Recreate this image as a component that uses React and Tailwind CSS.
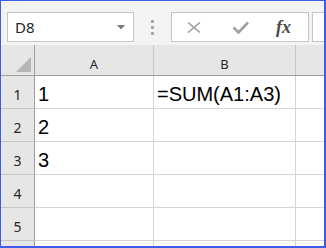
export default function App() {
  const rows = [
    { n: "1", a: "1", b: "=SUM(A1:A3)" },
    { n: "2", a: "2", b: "" },
    { n: "3", a: "3", b: "" },
    { n: "4", a: "", b: "" },
    { n: "5", a: "", b: "" },
    { n: "", a: "", b: "" },
  ];
  return (
    <div className="w-[326px] h-[248px] border-l border-t border-r-2 border-b-2 border-[#3c5de6] overflow-hidden flex flex-col bg-white">
      <div className="h-[44px] shrink-0 bg-[#f3f3f3] flex items-start pt-[11px] pl-[6px]">
        <div className="w-[127px] h-[30px] bg-white border border-[#c6c6c6] flex items-center justify-between pl-[7px] pr-[8px]">
          <span className="text-[15px] text-[#262626] leading-none" style={{ fontFamily: '"Noto Sans", sans-serif' }}>D8</span>
          <svg width="8" height="5" viewBox="0 0 8 5"><path d="M0 0 L8 0 L4 4.5 Z" fill="#7a7a7a" /></svg>
        </div>
        <div className="w-[37px] h-[30px] flex flex-col items-center justify-center gap-[3px]">
          <div className="w-[3px] h-[3px] bg-[#a8a8a8]" />
          <div className="w-[3px] h-[3px] bg-[#a8a8a8]" />
          <div className="w-[3px] h-[3px] bg-[#a8a8a8]" />
        </div>
        <div className="w-[138px] h-[30px] bg-white border border-[#c6c6c6] flex items-center">
          <div className="w-[15px]" />
          <svg width="14" height="11" viewBox="0 0 14 11">
            <path d="M1 0.5 L13 10.5 M13 0.5 L1 10.5" stroke="#a0a0a0" strokeWidth="1.6" />
          </svg>
          <div className="w-[31px]" />
          <svg width="17" height="13" viewBox="0 0 17 13">
            <path d="M1.5 6.5 L6.5 11.5 L16 1.5" stroke="#a0a0a0" strokeWidth="2.6" fill="none" />
          </svg>
          <div className="w-[27px]" />
          <span className="italic text-[18px] text-[#4a4a4a] leading-none font-bold" style={{ fontFamily: '"Liberation Serif", serif' }}>fx</span>
        </div>
        <div className="ml-[3px] flex-1 h-[30px] bg-white border border-r-0 border-[#c6c6c6]" />
      </div>
      <div className="h-[31px] shrink-0 flex border-b border-[#9e9e9e] bg-[#e6e6e6]">
        <div className="w-[34px] shrink-0 border-r border-[#9e9e9e] flex items-end justify-end pr-[3px] pb-[3px]">
          <svg width="15" height="15" viewBox="0 0 15 15"><path d="M15 0 L15 15 L0 15 Z" fill="#b5b5b5" /></svg>
        </div>
        <div className="w-[119px] shrink-0 border-r border-[#c6c6c6] flex items-end justify-center pb-[1px] text-[13px] text-[#262626]" style={{ fontFamily: '"Noto Sans", sans-serif' }}>A</div>
        <div className="w-[142px] shrink-0 border-r border-[#c6c6c6] flex items-end justify-center pb-[1px] text-[13px] text-[#262626]" style={{ fontFamily: '"Noto Sans", sans-serif' }}>B</div>
        <div className="flex-1" />
      </div>
      {rows.map((r, i) => (
        <div key={i} className="h-[33px] shrink-0 flex">
          <div className="w-[34px] shrink-0 bg-[#e6e6e6] border-r border-b border-r-[#9e9e9e] border-b-[#c6c6c6] flex items-end justify-center pb-[3px] text-[14px] text-[#262626]" style={{ fontFamily: '"Noto Sans", sans-serif' }}>{r.n}</div>
          <div className="w-[119px] shrink-0 border-r border-b border-[#d4d4d4] flex items-end pl-[3px] pb-[1px] text-[20px] text-black leading-[26px]" style={{ fontFamily: '"Liberation Sans", Arial, sans-serif' }}>{r.a}</div>
          <div className="w-[142px] shrink-0 border-r border-b border-[#d4d4d4] flex items-end pl-[3px] pb-[1px] text-[20px] text-black leading-[26px]" style={{ fontFamily: '"Liberation Sans", Arial, sans-serif' }}>{r.b}</div>
          <div className="flex-1 border-b border-[#d4d4d4]" />
        </div>
      ))}
    </div>
  );
}
